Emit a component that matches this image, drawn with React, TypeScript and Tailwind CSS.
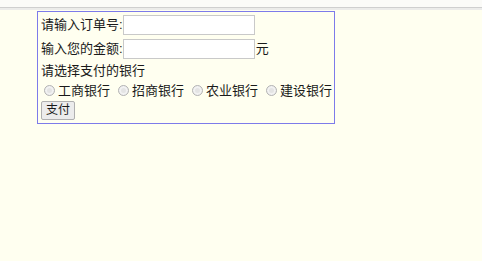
import React from 'react';

const banks = ['工商银行', '招商银行', '农业银行', '建设银行'];

function Radio() {
  return (
    <span className="inline-block w-[11px] h-[11px] rounded-full border border-[#b4b4b4] bg-[#e4e4e4] shadow-[inset_0_0_0_2px_#f2f2f2]" />
  );
}

export default function App() {
  return (
    <div className="w-[482px] h-[261px] bg-[#fffff0] text-[13px] text-[#1a1a1a] overflow-hidden" style={{ fontFamily: '"Liberation Sans", "Noto Sans CJK SC", sans-serif' }}>
      <div className="h-[7px] bg-[#fbfbf8]" />
      <div className="h-px bg-[#cfcfcf]" />
      <div className="h-[2px] bg-[#ececea]" />
      <div className="pl-[37px] pt-px">
        <div className="w-[298px] h-[113px] border border-[#7d7bea] pl-[3px] pt-[2px]">
          <div className="flex items-center h-[22px]">
            <span>请输入订单号:</span>
            <input className="w-[132px] h-[20px] bg-white border border-[#c9c9c9] outline-none" />
          </div>
          <div className="flex items-center h-[23px] mt-px">
            <span>输入您的金额:</span>
            <input className="w-[132px] h-[20px] bg-white border border-[#c9c9c9] outline-none" />
            <span className="ml-px">元</span>
          </div>
          <div className="flex items-center h-[21px]">请选择支付的银行</div>
          <div className="flex items-center h-[19px] whitespace-nowrap">
            {banks.map((b) => (
              <label key={b} className="flex items-center shrink-0 mr-[5px] last:mr-0">
                <span className="ml-[3px] mr-[3px] flex shrink-0"><Radio /></span>
                <span>{b}</span>
              </label>
            ))}
          </div>
          <button className="w-[34px] h-[19px] bg-[#ececec] border border-[#b0b0b0] rounded-[2px] text-[12px] leading-none">支付</button>
        </div>
      </div>
    </div>
  );
}
